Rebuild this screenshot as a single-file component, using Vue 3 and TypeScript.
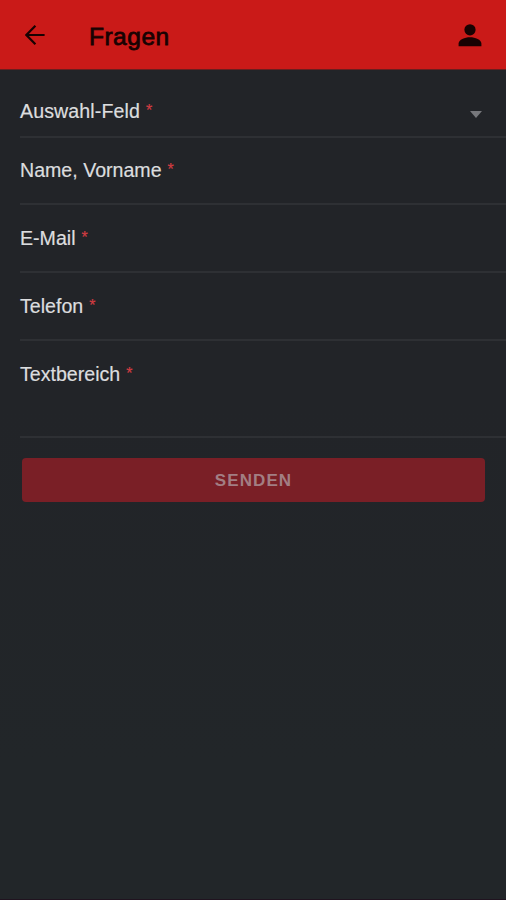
<script setup lang="ts">
interface Field {
  label: string
  kind: 'select' | 'input' | 'textarea'
}

const fields: Field[] = [
  { label: 'Auswahl-Feld', kind: 'select' },
  { label: 'Name, Vorname', kind: 'input' },
  { label: 'E-Mail', kind: 'input' },
  { label: 'Telefon', kind: 'input' },
  { label: 'Textbereich', kind: 'textarea' },
]
</script>

<template>
  <div class="screen">
    <header class="toolbar">
      <svg class="back" viewBox="0 0 20 20" fill="none" stroke="currentColor" stroke-width="2.2">
        <path d="M10.4 0.8 1.4 10l9 9.2M1.4 10H19.6" />
      </svg>
      <h1 class="title">Fragen</h1>
      <svg class="person" viewBox="0 0 24 24" fill="currentColor">
        <circle cx="12" cy="5.8" r="5.6" />
        <path d="M12 13.2c-5.2 0-11.4 2.4-11.4 6.3v2.7h22.8v-2.7c0-3.9-6.2-6.3-11.4-6.3z" />
      </svg>
    </header>
    <main class="form">
      <div v-for="field in fields" :key="field.label" class="field" :class="field.kind">
        <span class="label">{{ field.label }}</span>
        <span class="required">*</span>
        <svg v-if="field.kind === 'select'" class="caret" viewBox="0 0 12 7">
          <path d="M0 0h12L6 7z" fill="currentColor" />
        </svg>
      </div>
      <button class="submit" type="button" disabled>SENDEN</button>
    </main>
  </div>
</template>

<style>
body {
  margin: 0;
}
</style>

<style scoped>
.screen {
  box-sizing: border-box;
  height: 900px;
  overflow: hidden;
  background: linear-gradient(#222428 0%, #222428 45%, #222629 85%, #222629 100%);
  border-bottom: 1px solid #20131f;
  font-family: "Liberation Sans", Arial, sans-serif;
}
.toolbar {
  box-sizing: border-box;
  height: 70px;
  padding: 0 24px 0 25px;
  display: flex;
  align-items: center;
  background: #ca1a18;
  border-bottom: 1px solid #6b1e1e;
  color: #180202;
}
.back {
  width: 20px;
  height: 20px;
}
.title {
  flex: 1;
  margin: 4px 0 0 44px;
  font-size: 24.5px;
  line-height: 30px;
  font-weight: 400;
  letter-spacing: 0.5px;
  -webkit-text-stroke: 0.8px currentColor;
}
.person {
  width: 24px;
  height: 24px;
  margin-top: 2px;
}
.form {
  display: flex;
  flex-direction: column;
  padding-left: 20px;
}
.field {
  box-sizing: border-box;
  height: 68px;
  padding: 21px 24px 0 0;
  display: flex;
  align-items: flex-start;
  border-bottom: 2px solid #2e3034;
  color: #dcdddf;
  font-size: 19.6px;
  line-height: 24px;
  -webkit-text-stroke: 0.2px currentColor;
}
.field.select {
  height: 68px;
  margin-bottom: -1px;
  padding-top: 29px;
}
.select .label {
  letter-spacing: 0.1px;
}
.field.textarea {
  height: 97px;
}
.required {
  margin-left: 6px;
  color: #d23c42;
  font-size: 16px;
  line-height: 24px;
}
.caret {
  width: 12px;
  height: 7px;
  margin: 12px 0 0 auto;
  color: #77787c;
}
.submit {
  height: 44px;
  margin: 20px 21px 0 2px;
  padding: 1px 0 0;
  border: 0;
  border-radius: 4px;
  background: #7a1f26;
  color: #a27e83;
  font: bold 17px "Liberation Sans", Arial, sans-serif;
  letter-spacing: 1.1px;
}
</style>
